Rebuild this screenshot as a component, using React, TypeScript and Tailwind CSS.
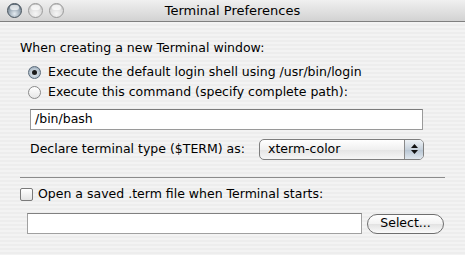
import React from "react";

const font = { fontFamily: '"Lucida Grande", "DejaVu Sans", sans-serif' };

function Light({ active }: { active?: boolean }) {
  return (
    <div
      className={
        "w-[15px] h-[15px] rounded-full border " +
        (active
          ? "border-[#46525c] bg-[radial-gradient(circle_at_50%_75%,#e4ebf1_0%,#9fadb9_45%,#4c5a67_100%)]"
          : "border-[#9a9a9a] bg-[radial-gradient(circle_at_50%_75%,#f6f6f6_0%,#dedede_50%,#bbbbbb_100%)]")
      }
    >
      <div className="mx-auto mt-[1px] w-[9px] h-[5px] rounded-full bg-white/70" />
    </div>
  );
}

function Radio({ checked }: { checked?: boolean }) {
  return (
    <div
      className={
        "w-[13px] h-[13px] rounded-full border flex items-center justify-center " +
        (checked
          ? "border-[#5a6a7a] bg-[radial-gradient(circle_at_50%_60%,#e8eef4_0%,#b4c2ce_60%,#7d8e9e_100%)]"
          : "border-[#8a8a8a] bg-[linear-gradient(#ffffff,#e6e6e6)]")
      }
    >
      {checked && <div className="w-[5px] h-[5px] rounded-full bg-[#1a1a1a]" />}
    </div>
  );
}

export default function App() {
  return (
    <div
      style={font}
      className="w-[465px] h-[255px] overflow-hidden text-[12.5px] text-black bg-[repeating-linear-gradient(180deg,#ededed_0px,#ededed_2px,#f3f3f3_2px,#f3f3f3_4px)]"
    >
      <div className="h-[22px] flex items-center relative border-b border-[#7f7f7f] bg-[linear-gradient(#f0f0f0,#d2d2d2)]">
        <div className="flex gap-[6px] pl-[7px]">
          <Light active />
          <Light />
          <Light />
        </div>
        <div className="absolute inset-0 flex items-center justify-center text-[13px] pt-[1px]">
          Terminal Preferences
        </div>
      </div>

      <div className="pl-[20px] pr-[20px] pt-[18px]">
        <div className="leading-[16px]">When creating a new Terminal window:</div>
        <div className="mt-[8px] pl-[8px] flex items-center gap-[7px] h-[16px]">
          <Radio checked />
          <span>Execute the default login shell using /usr/bin/login</span>
        </div>
        <div className="mt-[4px] pl-[8px] flex items-center gap-[7px] h-[16px]">
          <Radio />
          <span>Execute this command (specify complete path):</span>
        </div>
        <div className="mt-[9px] ml-[10px] w-[393px] h-[21px] bg-white border border-[#9a9a9a] border-t-[#7a7a7a] flex items-center pl-[4px]">
          /bin/bash
        </div>
        <div className="mt-[8px] ml-[10px] flex items-center h-[22px]">
          <span>Declare terminal type ($TERM) as:</span>
          <div className="ml-[14px] w-[165px] h-[21px] rounded-[5px] border border-[#7e7e7e] bg-[linear-gradient(#ffffff,#f0f0f0_50%,#e4e4e4_51%,#f6f6f6)] flex items-center overflow-hidden">
            <span className="pl-[8px] flex-1">xterm-color</span>
            <div className="w-[19px] h-full border-l border-[#8a8a8a] bg-[linear-gradient(#eef2f6,#c6d1dc_50%,#b6c4d2_51%,#e0e7ee)] flex flex-col items-center justify-center gap-[2px]">
              <svg width="7" height="4" viewBox="0 0 7 4"><path d="M3.5 0L7 4H0z" fill="#111" /></svg>
              <svg width="7" height="4" viewBox="0 0 7 4"><path d="M0 0h7L3.5 4z" fill="#111" /></svg>
            </div>
          </div>
        </div>
        <div className="mt-[17px] w-[425px] h-[1px] bg-[#8c8c8c]" />
        <div className="mt-[8px] flex items-center gap-[5px] h-[16px]">
          <div className="w-[13px] h-[13px] rounded-[2px] border border-[#7a7a7a] bg-[linear-gradient(#ffffff,#e4e4e4)]" />
          <span>Open a saved .term file when Terminal starts:</span>
        </div>
        <div className="mt-[11px] ml-[7px] flex items-center">
          <div className="w-[335px] h-[21px] bg-white border border-[#a0a0a0] border-t-[#808080]" />
          <div className="ml-[5px] w-[77px] h-[20px] rounded-full border border-[#6e6e6e] bg-[linear-gradient(#ffffff,#f2f2f2_50%,#e2e2e2_51%,#fafafa)] flex items-center justify-center">
            Select...
          </div>
        </div>
      </div>
    </div>
  );
}
